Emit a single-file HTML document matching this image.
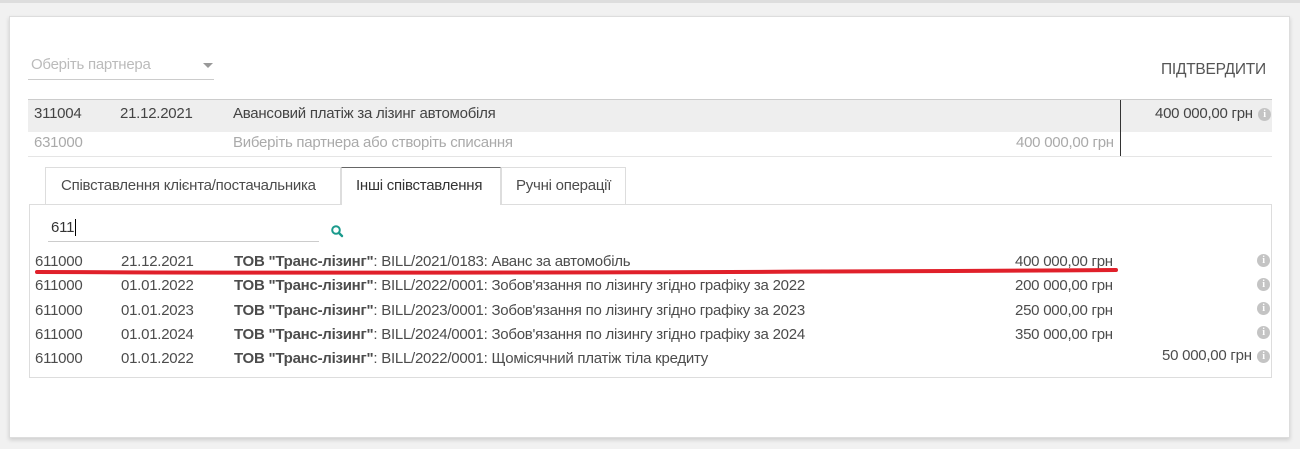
<!DOCTYPE html>
<html><head><meta charset="utf-8"><style>
*{box-sizing:border-box;margin:0;padding:0}
body{width:1300px;height:449px;background:#f1f1f1;font-family:"Liberation Sans",sans-serif;font-size:15px;color:#4c4c4c;position:relative;overflow:hidden;letter-spacing:-0.25px}
.card{position:absolute;left:9px;top:16px;width:1281px;height:422px;background:#fff;border:1px solid #ddd;box-shadow:0 2px 4px rgba(0,0,0,.15)}
.top{position:absolute;left:0;top:0;width:1300px;height:3px;background:#ddd}
.a{position:absolute;white-space:nowrap}
.info{position:absolute;display:block;width:13px;height:13px;border-radius:50%;background:#c4c4c4;color:#fff;font-size:10px;font-weight:bold;text-align:center;line-height:13px;font-family:"Liberation Serif",serif}
</style></head><body>
<div class="top"></div>
<div class="card"></div>
<div class="a" style="left:31px;top:56px;color:#bbb">Оберіть партнера</div>
<div class="a" style="left:203px;top:63px;width:0;height:0;border-left:5px solid transparent;border-right:5px solid transparent;border-top:5px solid #999"></div>
<div class="a" style="left:28px;top:79px;width:186px;height:1px;background:#ccc"></div>
<div class="a" style="left:1161px;top:61px;font-size:15.5px;color:#555">ПІДТВЕРДИТИ</div>
<div class="a" style="left:28px;top:99px;width:1244px;height:33px;background:#eee;border-top:1px solid #ccc"></div>
<div class="a" style="left:28px;top:156px;width:1244px;height:1px;background:#e5e5e5"></div>
<div class="a" style="left:1120px;top:100px;width:1px;height:56px;background:#333"></div>
<div class="a" style="left:34px;top:105px;color:#444">311004</div>
<div class="a" style="left:120px;top:105px;color:#444">21.12.2021</div>
<div class="a" style="left:233px;top:105px;color:#444">Авансовий платіж за лізинг автомобіля</div>
<div class="a" style="left:1155px;top:105px;color:#444">400 000,00 грн</div>
<span class="info" style="left:1258px;top:108px">i</span>
<div class="a" style="left:34px;top:134px;color:#aaa">631000</div>
<div class="a" style="left:233px;top:134px;color:#aaa">Виберіть партнера або створіть списання</div>
<div class="a" style="left:1016px;top:134px;color:#aaa">400 000,00 грн</div>
<div class="a" style="left:29px;top:204px;width:1243px;height:174px;border:1px solid #ddd"></div>
<div class="a" style="left:45px;top:167px;width:296px;height:37px;border:1px solid #ddd;border-bottom:none;padding:9px 0 0 15px">Співставлення клієнта/постачальника</div>
<div class="a" style="left:341px;top:167px;width:160px;height:38px;border:1px solid #ddd;border-top-color:#666;border-bottom:none;background:#fff;padding:9px 0 0 14px;color:#333">Інші співставлення</div>
<div class="a" style="left:501px;top:167px;width:125px;height:37px;border:1px solid #ddd;border-bottom:none;padding:9px 0 0 14px">Ручні операції</div>
<div class="a" style="left:51px;top:219px;color:#333">611<span style="border-left:1px solid #000;margin-left:1px"></span></div>
<div class="a" style="left:48px;top:241px;width:271px;height:1px;background:#ccc"></div>
<svg class="a" style="left:330px;top:224px" width="14" height="14" viewBox="0 0 14 14"><circle cx="6" cy="6" r="3.8" fill="none" stroke="#1a9a8c" stroke-width="2"/><path d="M9 9l3 3" stroke="#1a9a8c" stroke-width="2.4" stroke-linecap="round"/></svg>
<div class="a" style="left:35px;top:250px;line-height:24.3px">611000<br>611000<br>611000<br>611000<br>611000</div>
<div class="a" style="left:121px;top:250px;line-height:24.3px">21.12.2021<br>01.01.2022<br>01.01.2023<br>01.01.2024<br>01.01.2022</div>
<div class="a" style="left:234px;top:250px;line-height:24.3px"><b>ТОВ "Транс-лізинг"</b>: BILL/2021/0183: Аванс за автомобіль<br><b>ТОВ "Транс-лізинг"</b>: BILL/2022/0001: Зобов'язання по лізингу згідно графіку за 2022<br><b>ТОВ "Транс-лізинг"</b>: BILL/2023/0001: Зобов'язання по лізингу згідно графіку за 2023<br><b>ТОВ "Транс-лізинг"</b>: BILL/2024/0001: Зобов'язання по лізингу згідно графіку за 2024<br><b>ТОВ "Транс-лізинг"</b>: BILL/2022/0001: Щомісячний платіж тіла кредиту</div>
<div class="a" style="left:1015px;top:250px;line-height:24.3px">400 000,00 грн<br>200 000,00 грн<br>250 000,00 грн<br>350 000,00 грн</div>
<div class="a" style="left:1162px;top:347px">50 000,00 грн</div>
<span class="info" style="left:1257px;top:254px">i</span>
<span class="info" style="left:1257px;top:278px">i</span>
<span class="info" style="left:1257px;top:302px">i</span>
<span class="info" style="left:1257px;top:326px">i</span>
<span class="info" style="left:1257px;top:350px">i</span>
<svg class="a" style="left:0;top:0" width="1300" height="449"><path d="M37 272 Q500 274 1116 270" fill="none" stroke="#e0202a" stroke-width="4" stroke-linecap="round"/></svg>
</body></html>
